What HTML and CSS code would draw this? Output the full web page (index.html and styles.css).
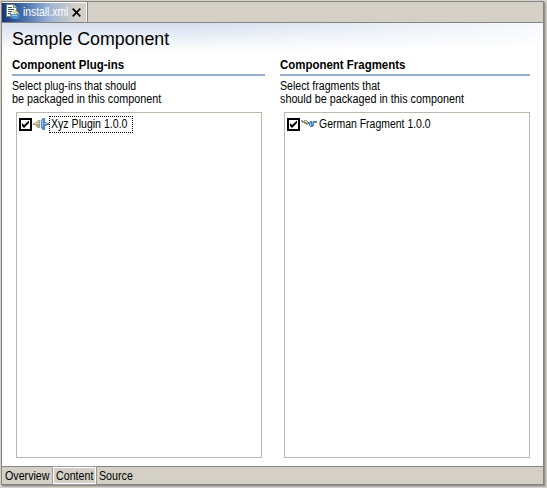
FILE: index.html
```html
<!DOCTYPE html>
<html lang="en">
<head>
<meta charset="utf-8">
<title>install.xml</title>
<link rel="stylesheet" href="styles.css">
</head>
<body>
<div class="editor">
  <header class="tabs">
    <div class="tab">
      <svg class="file-icon" width="16" height="16" viewBox="0 0 16 16">
        <path d="M1.500.5h7l3 3v9h-10z" fill="#f8faf4" stroke="#75877b"/>
        <path d="M8.500.5v3h3" fill="#dfd9ae" stroke="#75877b"/>
        <path d="M3 3.500h4M3 5.500h6M3 7.500h4M3 9.500h3" stroke="#2f6260"/>
        <path d="M6 9l4-3 3 2 1 2z" fill="#d8cf91"/>
        <path d="M5 10h10l-1 4-2 1H8l-2-1z" fill="#4e91c7"/>
        <path d="M7 11.500h5" stroke="#9bd0ef"/>
      </svg>
      <span class="t-file">install.xml</span>
      <svg class="close" width="9" height="9" viewBox="0 0 9 9"><path d="M.7.7l7.600 7.600M8.300.7L.7 8.300" stroke="#000" stroke-width="1.700"/></svg>
    </div>
  </header>
  <main class="page">
    <h1><span class="t-title">Sample Component</span></h1>
    <div class="columns">
      <section>
        <h2><span class="t-plugins">Component Plug-ins</span></h2>
        <p><span class="narrow">Select plug-ins that should</span><br><span class="t-packaged">be packaged in this component</span></p>
        <div class="list">
          <div class="item">
            <svg class="check" width="13" height="13" viewBox="0 0 13 13"><path d="M1 1h11v11H1z" fill="#fff" stroke="#000" stroke-width="2"/><path d="M3 5v3l2 2 5-5V2.500L5 7z" fill="#000"/></svg>
            <svg class="plug" width="16" height="16" viewBox="0 0 16 16">
              <path d="M0 7h2l3-3h2v8H5L2 9H0z" fill="#aaa582"/>
              <path d="M2 7h4v1H2zM4 5h2v1H4z" fill="#e3ddba"/>
              <path d="M7 4h1v8H7z" fill="#e8edf0"/>
              <path d="M8 4l1-1 1-1h2v4h1l1 1h2v2h-2l-1 1h-1v4h-2l-1-1-1-1z" fill="#4f87c4"/>
              <path d="M9 4h1v7H9zM11 7h3v1h-3z" fill="#a6cdef"/>
            </svg>
            <span class="label focused"><span class="t-xyz">Xyz Plugin 1.0.0</span></span>
          </div>
        </div>
      </section>
      <section>
        <h2><span class="t-plugins">Component Fragments</span></h2>
        <p><span class="narrow">Select fragments that</span><br><span class="t-packaged">should be packaged in this component</span></p>
        <div class="list">
          <div class="item">
            <svg class="check" width="13" height="13" viewBox="0 0 13 13"><path d="M1 1h11v11H1z" fill="#fff" stroke="#000" stroke-width="2"/><path d="M3 5v3l2 2 5-5V2.500L5 7z" fill="#000"/></svg>
            <svg class="plug" width="16" height="16" viewBox="0 0 16 16">
              <path d="M0 4h2v1h1V4h3v1h1v4H5V8H3V7H1V6H0z" fill="#aaa582"/>
              <path d="M1 5h1v1H1zM3 6h1v1H3zM5 7h1v1H5z" fill="#666e63"/>
              <path d="M4 5h2v1H4z" fill="#e4dfbd"/>
              <path d="M7 6h2V5h2v1h1V5h4v2h-3v3h-1v1h-3v-1H8V8H7z" fill="#4f83bd"/>
              <path d="M9 7h1v3H9zM11 7h1v1h-1z" fill="#a0caec"/>
            </svg>
            <span class="label"><span class="t-german">German Fragment 1.0.0</span></span>
          </div>
        </div>
      </section>
    </div>
  </main>
  <footer class="pages">
    <div class="overview"><span class="t-page">Overview</span></div>
    <div class="selected"><span class="t-page">Content</span></div>
    <div class="source"><span class="t-page">Source</span></div>
  </footer>
</div>
</body>
</html>
```
FILE: styles.css
```css
* { box-sizing: border-box; }
body {
  margin: 0;
  width: 547px;
  height: 488px;
  padding: 1px 0 0 1px;
  overflow: hidden;
  background: #d4d0c8;
  font: 12px/13px "Liberation Sans", Arial, sans-serif;
  color: #000;
}
span { white-space: nowrap; }
svg { display: block; flex: none; }
.editor {
  width: 543px;
  height: 484px;
  display: flex;
  flex-direction: column;
  border: 1px solid #848484;
  box-shadow: 1px 1px 0 #929292, 2px 2px 0 #b5b2ac;
}
.tabs {
  height: 21px;
  flex: none;
  display: flex;
  background: #d4d0c6;
  border-bottom: 1px solid #848484;
}
.tab {
  width: 86px;
  display: flex;
  align-items: center;
  padding-left: 3px;
  background: linear-gradient(90deg, #163777 0, #4269a8 20px, #9db6d6 48px, #d4d0c8 74px);
  border-right: 1px solid #848484;
  box-shadow: inset -1px 1px 0 #fff;
  color: #fff;
}
.tab > span { width: 48px; margin-left: 2px; }
.close { margin-left: 1px; }
.page {
  flex: 1;
  padding: 6px 10px 0;
  background: linear-gradient(90deg, transparent 35%, rgba(255,255,255,.8)), linear-gradient(#d6dfef, #fff 28px);
}
h1 { margin: 0; height: 30px; font: 18px/20px "Liberation Sans", Arial, sans-serif; }
.columns { display: grid; grid-template-columns: 253px 250px; gap: 15px; }
h2 {
  margin: 0 0 4px;
  height: 17px;
  border-bottom: 2px solid #99abcf;
  font-size: 12px;
  line-height: 13px;
}
p { margin: 0 0 5px; height: 27px; }
.list { width: 246px; height: 346px; margin-left: 4px; border: 1px solid #bbb9ae; background: #fff; padding: 2px; }
.item { display: flex; align-items: center; height: 18px; }
.check { margin-right: 1px; }
.label { height: 17px; padding: 2px 0 0 2px; }
.focused { width: 84px; border: 1px dotted #000; padding: 1px 0 0 1px; }
.t-title, .t-plugins, .narrow, .t-packaged, .t-xyz, .t-german, .t-page, .t-file { display: inline-block; transform-origin: 0 50%; }
.t-title { transform: scaleX(.988); }
.t-plugins { transform: scaleX(.955); }
.narrow, .t-xyz, .t-file { transform: scaleX(.882); }
.t-file { transform: scaleX(.86); }
.t-packaged { transform: scaleX(.898); }
.t-german { transform: scaleX(.872); }
.t-page { transform: scaleX(.89); }
.pages { height: 18px; flex: none; display: flex; background: #d4d0c6; border-top: 1px solid #848484; line-height: 18px; }
.overview { width: 51px; padding-left: 3px; }
.selected { width: 43px; padding-left: 2px; border: 1px solid #fff; outline: 1px solid #999; line-height: 16px; }
.source { padding-left: 3px; }
```
